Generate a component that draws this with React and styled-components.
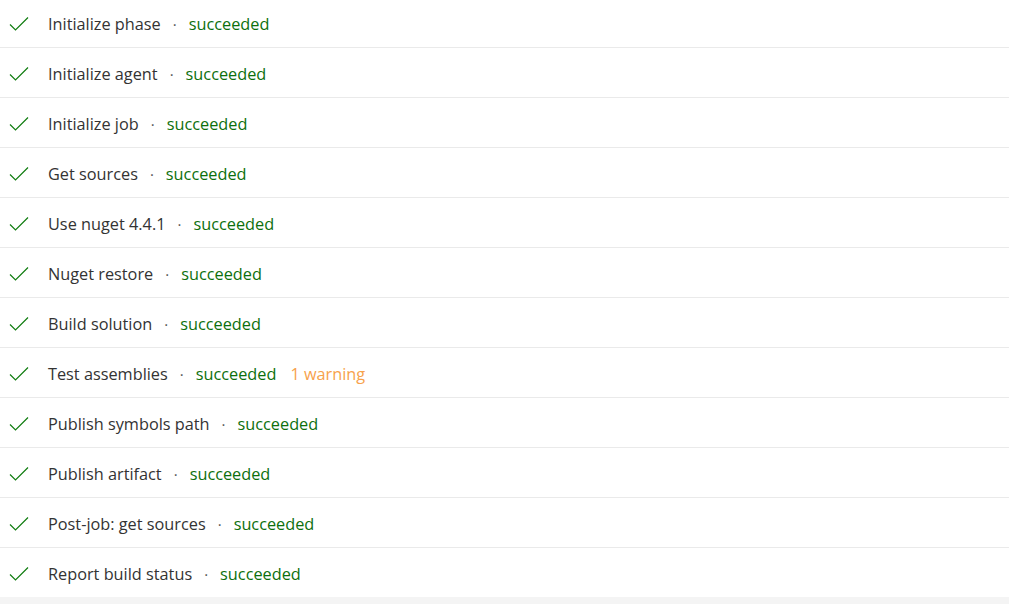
import React from "react";
import styled, { createGlobalStyle } from "styled-components";

const Global = createGlobalStyle`
  html, body { margin: 0; padding: 0; background: #f4f4f4; }
  body { font-family: "Segoe UI", "Open Sans", "Noto Sans", sans-serif; overflow: hidden; }
`;

const List = styled.ul`
  list-style: none;
  margin: -2px 0 0 0;
  padding: 0;
  background: #fff;
  box-shadow: 0 1px 3px rgba(0,0,0,0.06);
`;

const Row = styled.li`
  display: flex;
  align-items: center;
  box-sizing: border-box;
  height: 50px;
  padding: 2px 0 0 9px;
  border-bottom: 1px solid #eaeaea;
  &:last-child { border-bottom: none; height: 49px; }
`;

const Icon = styled.span`
  display: flex;
  width: 20px;
  margin-right: 19px;
  margin-top: 1px;
`;

const Name = styled.span`
  font-size: 16.3px;
  color: #333;
`;

const Dot = styled.span`
  font-size: 15px;
  color: #555;
  margin: 0 12px;
`;

const Status = styled.span`
  font-size: 16.3px;
  color: ${(p) => (p.$warn ? "#f7a24b" : "#0d700d")};
  margin-left: ${(p) => (p.$warn ? "14px" : "0")};
`;

const Check = () => (
  <svg width="20" height="16" viewBox="0 0 20 16" fill="none">
    <path d="M1 8.5 L6.5 14 L19 1.5" stroke="#107c10" strokeWidth="1.2" />
  </svg>
);

const steps = [
  ["Initialize phase"],
  ["Initialize agent"],
  ["Initialize job"],
  ["Get sources"],
  ["Use nuget 4.4.1"],
  ["Nuget restore"],
  ["Build solution"],
  ["Test assemblies", "1 warning"],
  ["Publish symbols path"],
  ["Publish artifact"],
  ["Post-job: get sources"],
  ["Report build status"],
];

export default function App() {
  return (
    <>
      <Global />
      <List>
        {steps.map(([name, warn]) => (
          <Row key={name}>
            <Icon><Check /></Icon>
            <Name>{name}</Name>
            <Dot>·</Dot>
            <Status>succeeded</Status>
            {warn && <Status $warn>{warn}</Status>}
          </Row>
        ))}
      </List>
    </>
  );
}
